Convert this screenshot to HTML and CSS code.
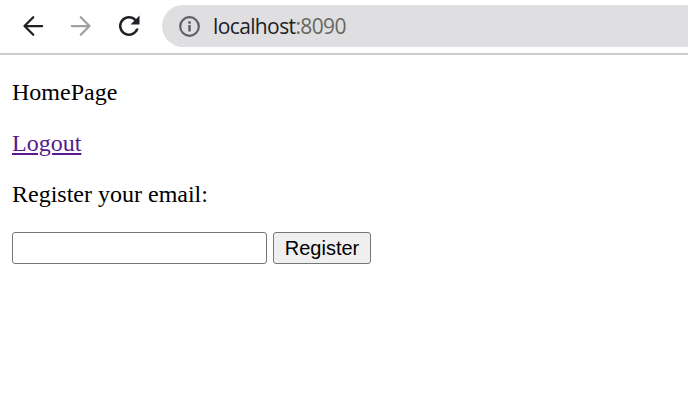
FILE: index.html
```html
<!DOCTYPE html>
<html lang="en">
<head>
<meta charset="utf-8">
<title>HomePage</title>
<link rel="stylesheet" href="styles.css">
</head>
<body>
<header class="toolbar">
  <svg class="nav-icon" viewBox="0 0 24 24"><path d="M19.3 12H5.2M12.2 5l-7 7 7 7"/></svg>
  <svg class="nav-icon disabled" viewBox="0 0 24 24"><path d="M4.7 12h14.1M11.8 5l7 7-7 7"/></svg>
  <svg class="nav-icon reload" viewBox="0 0 24 24"><path d="M17.65 6.35A8 8 0 1 0 19.73 14h-2.08A6 6 0 1 1 12 6c1.66 0 3.14.69 4.22 1.78L13.2 10.8H20.4V3.6z"/></svg>
  <div class="address">
    <svg class="info" viewBox="0 0 24 24"><path d="M10.8 7h2.4v2.3h-2.4zm0 3.6h2.4v6.2h-2.4zM12 2a10 10 0 1 0 0 20 10 10 0 0 0 0-20zm0 17.9a7.9 7.9 0 1 1 0-15.8 7.9 7.9 0 0 1 0 15.8z"/></svg>
    <span class="url">localhost<span class="port">:8090</span></span>
  </div>
</header>
<main class="page">
  <p>HomePage</p>
  <p><a href="#">Logout</a></p>
  <p>Register your email:</p>
  <form class="form">
    <input class="email" type="text" aria-label="Email">
    <button class="register" type="button">Register</button>
  </form>
</main>
</body>
</html>
```

FILE: styles.css
```css
* { box-sizing: border-box; }
body { margin: 0; background: #fff; color: #000; overflow: hidden; }
.toolbar {
  display: flex;
  align-items: flex-start;
  height: 55px;
  padding: 5px 0 0 18px;
  border-bottom: 2px solid #cbcbcb;
}
.nav-icon {
  width: 30px;
  height: 30px;
  margin: 6px 18px 0 0;
  flex: none;
  fill: none;
  stroke: #202124;
  stroke-width: 1.8;
  stroke-linecap: round;
  stroke-linejoin: round;
}
.nav-icon.disabled { stroke: #a0a0a0; }
.nav-icon.reload { fill: #202124; stroke: none; }
.address {
  display: flex;
  align-items: center;
  flex: 1;
  height: 42px;
  padding-left: 15px;
  border-radius: 21px 0 0 21px;
  background: #dfdfe1;
}
.info { width: 25px; height: 25px; fill: #5f6063; }
.url { margin-left: 11px; font: 21px/30px "Open Sans", sans-serif; letter-spacing: -0.62px; color: #202124; }
.port { color: #66675f; }
.page { padding: 24px 12px; font: 24px/27px "Liberation Serif", serif; }
.page p { margin: 0 0 24px; }
.page a { color: #551a8b; text-decoration-thickness: 2px; text-underline-offset: 2px; }
.form { display: flex; gap: 6px; }
.email { width: 255px; height: 32px; border: 1px solid #767676; border-radius: 3px; background: #fff; }
.register {
  width: 98px;
  height: 32px;
  padding: 0;
  border: 1px solid #767676;
  border-radius: 3px;
  background: #efefef;
  color: #000;
  font: 20px/28px "Liberation Sans", sans-serif;
}
```
